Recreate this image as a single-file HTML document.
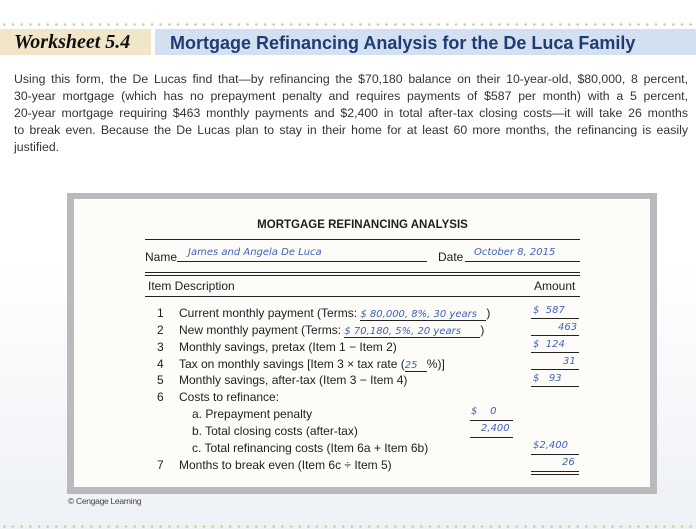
<!DOCTYPE html>
<html><head><meta charset="utf-8"><style>
*{margin:0;padding:0;box-sizing:border-box}
body{width:696px;height:529px;position:relative;overflow:hidden;background:linear-gradient(#fff 0,#fff 260px,#eef1f5 529px);font-family:"Liberation Sans",sans-serif;color:#2b2b2b}
.dots{position:absolute;left:0;width:696px;height:3px;background-image:radial-gradient(circle,#c6d19e 1.2px,transparent 1.4px);background-size:8.7px 3px}
.a{position:absolute;white-space:nowrap}
.hw{color:#3f63b8;font-family:"DejaVu Sans",sans-serif;font-style:italic;font-size:10px}
.ln{position:absolute;height:1px;background:#222}
.f{font-size:12px;color:#1e1e1e}
.p div{text-align:justify;text-align-last:justify;white-space:nowrap}
</style></head><body>
<div class="dots" style="top:23px"></div>
<div style="position:absolute;left:0;top:29px;width:151px;height:26px;background:#f1e6c8"></div>
<div style="position:absolute;left:155px;top:29px;width:541px;height:26px;background:#d3e0f2"></div>
<div class="a" style="left:14px;top:31px;font-family:'Liberation Serif',serif;font-style:italic;font-weight:bold;font-size:20px;color:#111">Worksheet 5.4</div>
<div class="a" style="left:170px;top:33px;font-weight:bold;font-size:18px;color:#1f3c73">Mortgage Refinancing Analysis for the De Luca Family</div>
<div class="p" style="position:absolute;left:14px;top:71px;width:674px;font-size:12.3px;line-height:17px;color:#333">
<div>Using this form, the De Lucas find that—by refinancing the $70,180 balance on their 10-year-old, $80,000, 8 percent,</div>
<div>30-year mortgage (which has no prepayment penalty and requires payments of $587 per month) with a 5 percent,</div>
<div>20-year mortgage requiring $463 monthly payments and $2,400 in total after-tax closing costs—it will take 26 months</div>
<div>to break even. Because the De Lucas plan to stay in their home for at least 60 more months, the refinancing is easily</div>
<div style="text-align-last:left">justified.</div>
</div>
<div style="position:absolute;left:67px;top:193px;width:590px;height:301px;background:#b9babd"></div>
<div style="position:absolute;left:74px;top:199px;width:576px;height:288px;background:#fdfcf8"></div>
<div class="a" style="left:145px;width:435px;text-align:center;top:219px;font-weight:bold;font-size:11.5px;color:#1e1e1e">MORTGAGE REFINANCING ANALYSIS</div>
<div class="ln" style="left:145px;top:239px;width:435px"></div>
<div class="a f" style="left:145px;top:250px">Name</div>
<div class="ln" style="left:177px;top:261px;width:250px"></div>
<div class="a hw" style="left:188px;top:247px">James and Angela De Luca</div>
<div class="a f" style="left:438px;top:250px">Date</div>
<div class="ln" style="left:465px;top:261px;width:115px"></div>
<div class="a hw" style="left:474px;top:247px">October 8, 2015</div>
<div class="ln" style="left:145px;top:272px;width:435px"></div>
<div class="ln" style="left:145px;top:275px;width:435px"></div>
<div class="a f" style="left:148px;top:279px">Item Description</div>
<div class="a f" style="left:534px;top:279px">Amount</div>
<div class="ln" style="left:145px;top:296px;width:435px"></div>

<div class="a f" style="left:157px;top:306px">1</div><div class="a f" style="left:179px;top:306px">Current monthly payment (Terms: <span style="display:inline-block;width:126px;border-bottom:1px solid #222"><span class="hw">$ 80,000, 8%, 30 years</span></span>)</div>
<div class="a f" style="left:157px;top:323px">2</div><div class="a f" style="left:179px;top:323px">New monthly payment (Terms: <span style="display:inline-block;width:136px;border-bottom:1px solid #222"><span class="hw">$ 70,180, 5%, 20 years</span></span>)</div>
<div class="a f" style="left:157px;top:340px">3</div><div class="a f" style="left:179px;top:340px">Monthly savings, pretax (Item 1 − Item 2)</div>
<div class="a f" style="left:157px;top:357px">4</div><div class="a f" style="left:179px;top:357px">Tax on monthly savings [Item 3 × tax rate (<span style="display:inline-block;width:22px;border-bottom:1px solid #222"><span class="hw">25</span></span>%)]</div>
<div class="a f" style="left:157px;top:373px">5</div><div class="a f" style="left:179px;top:373px">Monthly savings, after-tax (Item 3 − Item 4)</div>
<div class="a f" style="left:157px;top:390px">6</div><div class="a f" style="left:179px;top:390px">Costs to refinance:</div>
<div class="a f" style="left:192px;top:407px">a. Prepayment penalty</div>
<div class="a f" style="left:192px;top:424px">b. Total closing costs (after-tax)</div>
<div class="a f" style="left:192px;top:441px">c. Total refinancing costs (Item 6a + Item 6b)</div>
<div class="a f" style="left:157px;top:458px">7</div><div class="a f" style="left:179px;top:458px">Months to break even (Item 6c ÷ Item 5)</div>

<div class="a hw" style="left:533px;top:305px">$&nbsp;&nbsp;587</div><div class="ln" style="left:531px;top:318px;width:48px"></div>
<div class="a hw" style="left:558px;top:322px">463</div><div class="ln" style="left:531px;top:335px;width:48px"></div>
<div class="a hw" style="left:533px;top:339px">$&nbsp;&nbsp;124</div><div class="ln" style="left:531px;top:352px;width:48px"></div>
<div class="a hw" style="left:563px;top:356px">31</div><div class="ln" style="left:531px;top:369px;width:48px"></div>
<div class="a hw" style="left:533px;top:373px">$&nbsp;&nbsp;&nbsp;93</div><div class="ln" style="left:531px;top:386px;width:48px"></div>
<div class="a hw" style="left:471px;top:406px">$&nbsp;&nbsp;&nbsp;&nbsp;0</div><div class="ln" style="left:470px;top:420px;width:43px"></div>
<div class="a hw" style="left:481px;top:423px">2,400</div><div class="ln" style="left:470px;top:437px;width:43px"></div>
<div class="a hw" style="left:533px;top:440px">$2,400</div><div class="ln" style="left:531px;top:454px;width:48px"></div>
<div class="a hw" style="left:562px;top:457px">26</div><div class="ln" style="left:531px;top:471px;width:48px"></div><div class="ln" style="left:531px;top:474px;width:48px"></div>

<div class="a" style="left:68px;top:496px;font-size:8.5px;color:#444;letter-spacing:-0.3px">© Cengage Learning</div>
<div class="dots" style="top:525px"></div>
</body></html>
